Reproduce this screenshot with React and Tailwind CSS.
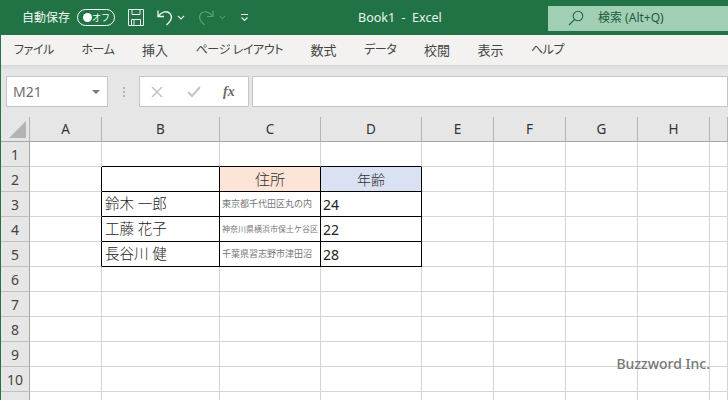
const font = { fontFamily: '"Noto Sans", "Noto Sans CJK JP", sans-serif' };

const tabs = [
  { label: "ファイル", kana: true },
  { label: "ホーム", kana: true },
  { label: "挿入" },
  { label: "ページ レイアウト", kana: true },
  { label: "数式" },
  { label: "データ", kana: true },
  { label: "校閲" },
  { label: "表示" },
  { label: "ヘルプ", kana: true },
];
const columns = ["A", "B", "C", "D", "E", "F", "G", "H", "I"];
const widths = [
  "w-[72px]",
  "w-[118px]",
  "w-[101px]",
  "w-[101px]",
  "w-[72px]",
  "w-[72px]",
  "w-[72px]",
  "w-[72px]",
  "w-[18px]",
];
const people = [
  { row: 3, name: "鈴木 一郎", address: "東京都千代田区丸の内", size: "text-[9px]", age: "24" },
  { row: 4, name: "工藤 花子", address: "神奈川県横浜市保土ケ谷区", size: "text-[8px]", age: "22" },
  { row: 5, name: "長谷川 健", address: "千葉県習志野市津田沼", size: "text-[9px]", age: "28" },
];

const TitleBar = () => (
  <div className="flex h-[35px] shrink-0 items-center bg-[#217346] text-white">
    <span className="ml-[21px] text-[12px] leading-none text-[#f2f7f4]">自動保存</span>
    <div className="ml-[7px] flex h-[17px] w-[38px] items-center justify-between rounded-full border border-white pl-[5px] pr-[4px]">
      <span className="h-[9px] w-[9px] rounded-full bg-white" />
      <span className="text-[9px] leading-none">オフ</span>
    </div>
    <svg className="ml-[13px]" width="16" height="17" viewBox="0 0 16 17" fill="none" stroke="#e8f1ec" strokeWidth="1">
      <path d="M.5.5h15v16H.5z" />
      <path d="M4 .5v5h8v-5M3.5 16.5v-6h9v6M6 11v5" />
    </svg>
    <svg className="ml-[13px]" width="16" height="17" viewBox="0 0 16 17" fill="none" stroke="#f2f7f4" strokeWidth="1.3">
      <path d="M1 1.500v6h6" />
      <path d="M1.500 7C5 2.500 10 1.500 13 4.500c2.500 3 1.500 7-1.500 9.500L9.500 16" />
    </svg>
    <svg className="ml-[4px]" width="8" height="5" viewBox="0 0 8 5" fill="none" stroke="#e8f1ec" strokeWidth="1.2">
      <path d="M1 1l3 3 3-3" />
    </svg>
    <svg className="ml-[13px]" width="16" height="17" viewBox="0 0 16 17" fill="none" stroke="#5f9c7c" strokeWidth="1.2">
      <path d="M15 1.500v6H9" />
      <path d="M14.500 7C11 2.500 6 1.500 3 4.500c-2.500 3-1.500 7 1.500 9.500l2 2" />
    </svg>
    <svg className="ml-[5px]" width="7" height="5" viewBox="0 0 7 5" fill="none" stroke="#5f9c7c" strokeWidth="1">
      <path d="M1 1l2.500 3L6 1" />
    </svg>
    <svg className="ml-[14px]" width="9" height="9" viewBox="0 0 9 9" fill="none" stroke="#e8f1ec" strokeWidth="1.200">
      <path d="M1 1.500h7M1.500 4.500l3 3 3-3" />
    </svg>
    <span className="ml-[109px] mt-[2px] w-[100px] text-[12.5px] leading-none text-[#eaf3ee]">Book1&nbsp; -&nbsp; Excel</span>
    <div className="ml-auto mt-[1px] flex h-[25px] w-[180px] items-center bg-[#a0cfb4] pl-[20px] text-[#1d5c3b]">
      <svg width="16" height="16" viewBox="0 0 16 16" fill="none" stroke="#1d6b43" strokeWidth="1.100">
        <circle cx="10" cy="6" r="4.800" />
        <path d="M6.500 9.500L1 15" />
      </svg>
      <span className="ml-[14px] text-[12px] leading-none">検索 (Alt+Q)</span>
    </div>
  </div>
);

const RibbonTabs = () => (
  <div className="flex h-[30px] shrink-0 items-center gap-[27.5px] bg-[#f3f2f1] pl-[13px] text-[#444444] [font-feature-settings:'palt']">
    {tabs.map((tab) => (
      <span
        key={tab.label}
        className={`leading-none whitespace-nowrap ${tab.kana ? "text-[12px] tracking-[-0.4px]" : "text-[13px]"}`}
      >
        {tab.label}
      </span>
    ))}
  </div>
);

const FormulaBar = () => (
  <div className="flex h-[52px] shrink-0 bg-gradient-to-b from-[#d8d8d8] from-0% to-[#e6e6e6] to-10% pl-[5px] pt-[11px]">
    <div className="flex h-[31px] w-[102px] items-center justify-between border border-[#c6c6c6] bg-white pl-[6px] pr-[7px] text-[14px] text-[#6e6e6e]">
      <span>M21</span>
      <span className="h-0 w-0 border-x-[4px] border-t-[4px] border-x-transparent border-t-[#777777]" />
    </div>
    <div className="ml-[15px] flex h-[31px] w-[3px] flex-col justify-center gap-[2px]">
      <span className="h-[2px] w-[2px] bg-[#b5b5b5]" />
      <span className="h-[2px] w-[2px] bg-[#b5b5b5]" />
      <span className="h-[2px] w-[2px] bg-[#b5b5b5]" />
    </div>
    <div className="ml-[13px] flex h-[31px] w-[110px] items-center border border-[#c6c6c6] bg-white pl-[11px]">
      <svg width="12" height="12" viewBox="0 0 12 12" fill="none" stroke="#c4c4c4" strokeWidth="1.500">
        <path d="M1 1l10 10M11 1L1 11" />
      </svg>
      <svg className="ml-[24px]" width="14" height="12" viewBox="0 0 14 12" fill="none" stroke="#c4c4c4" strokeWidth="2">
        <path d="M1 6l4 4 8-9" />
      </svg>
      <span className="ml-[22px] font-['Liberation_Serif'] text-[14px] font-bold italic leading-none text-[#6b6b6b]">
        fx
      </span>
    </div>
    <div className="ml-[3px] h-[31px] flex-1 border border-[#c6c6c6] bg-white" />
  </div>
);

const ColumnHeaders = () => (
  <div className="flex h-[25px] shrink-0 border-b border-[#a6a6a6] bg-[#e6e6e6] text-[13.500px] text-[#333333]">
    <div className="flex w-[29px] shrink-0 items-end justify-end border-r border-[#b5b5b5] pb-[3px] pr-[3px]">
      <svg width="17" height="17" viewBox="0 0 17 17">
        <path d="M17 0v17H0z" fill="#b4b4b4" />
      </svg>
    </div>
    {columns.map((col, i) => (
      <div
        key={col}
        className={`flex shrink-0 items-center justify-center border-r border-[#b5b5b5] ${widths[i]}`}
      >
        {col !== "I" && col}
      </div>
    ))}
  </div>
);

const Cell = ({ index, row, children, className = "" }) => {
  // table sits in B2:D5, its outline is drawn by the neighbouring cells too
  const blackBottom = row >= 1 && row <= 5 && index >= 1 && index <= 3;
  const blackRight = row >= 2 && row <= 5 && index >= 0 && index <= 3;
  return (
    <div
      className={`flex shrink-0 items-center border-r border-b ${widths[index]} ${
        blackBottom ? "border-b-black" : "border-b-[#d4d4d4]"
      } ${blackRight ? "border-r-black" : "border-r-[#d4d4d4]"} ${className}`}
    >
      {children}
    </div>
  );
};

const Row = ({ row }) => {
  const person = people.find((p) => p.row === row);
  return (
    <div className="flex h-[25px] shrink-0">
      <div className="flex w-[29px] shrink-0 items-center justify-center border-r border-b border-r-[#a6a6a6] border-b-[#c0c0c0] bg-[#e6e6e6] text-[14px] text-[#444444]">
        {row}
      </div>
      {columns.map((col, i) => {
        if (row === 2 && col === "C") {
          return (
            <Cell key={col} index={i} row={row} className="justify-center bg-[#fce4d6] text-[15px] font-light text-[#333333]">
              住所
            </Cell>
          );
        }
        if (row === 2 && col === "D") {
          return (
            <Cell key={col} index={i} row={row} className="justify-center bg-[#d9e1f2] text-[14px] font-light text-[#333333]">
              年齢
            </Cell>
          );
        }
        if (person && col === "B") {
          return (
            <Cell key={col} index={i} row={row} className="pl-[3px] text-[14.500px] font-light text-[#222222]">
              {person.name}
            </Cell>
          );
        }
        if (person && col === "C") {
          return (
            <Cell key={col} index={i} row={row} className={`pl-[2px] whitespace-nowrap text-[#777777] ${person.size}`}>
              {person.address}
            </Cell>
          );
        }
        if (person && col === "D") {
          return (
            <Cell key={col} index={i} row={row} className="pl-[2px] text-[14px] text-[#222222]">
              {person.age}
            </Cell>
          );
        }
        return <Cell key={col} index={i} row={row} />;
      })}
    </div>
  );
};

export default function App() {
  return (
    <div style={font} className="relative h-[400px] w-[728px] overflow-hidden border-l border-l-[#217346] bg-white">
      <div className="flex h-full flex-col">
        <TitleBar />
        <RibbonTabs />
        <FormulaBar />
        <ColumnHeaders />
        {[1, 2, 3, 4, 5, 6, 7, 8, 9, 10, 11].map((row) => (
          <Row key={row} row={row} />
        ))}
      </div>
      <span className="absolute right-[18px] top-[353px] text-[14px] font-medium text-[#777777]">Buzzword Inc.</span>
    </div>
  );
}
